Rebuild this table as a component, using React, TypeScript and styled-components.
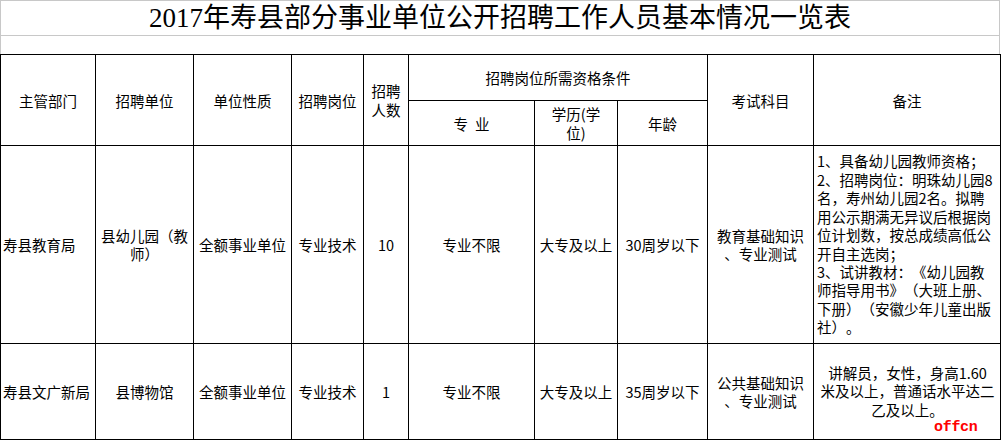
import styled, { createGlobalStyle } from 'styled-components';

const GlobalStyle = createGlobalStyle`
  html, body {
    margin: 0;
    padding: 0;
    background: #ffffff;
  }
  body {
    font-family: "Noto Sans CJK SC", "Liberation Sans", sans-serif;
    color: #000;
    text-spacing-trim: space-all;
  }
`;

const Sheet = styled.div`
  position: relative;
  width: 1000px;
`;

const TitleBar = styled.div`
  box-sizing: border-box;
  height: 35px;
  padding-top: 2px;
  border: 1px solid #c8c8c8;
  border-bottom: none;
  text-align: center;
  font-family: "Liberation Serif", "Noto Sans CJK SC", serif;
  font-size: 27px;
  line-height: 31px;
  white-space: nowrap;
`;

const Spacer = styled.div`
  box-sizing: border-box;
  height: 19px;
  border: 1px solid #c8c8c8;
  border-bottom: none;
`;

const Table = styled.table`
  border-collapse: collapse;
  table-layout: fixed;
  width: 1000px;
`;

const Row = styled.tr<{ $h: number }>`
  height: ${(p) => p.$h}px;
`;

const Cell = styled.td<{ $align?: 'left' | 'center' }>`
  border: 1px solid #000;
  padding: 0 2px;
  text-align: ${(p) => p.$align ?? 'center'};
  vertical-align: middle;
  font-size: 14.5px;
  line-height: 18px;
  white-space: pre;
`;

const HeadCell = styled(Cell)`
  line-height: 19px;
`;

const NoteCell = styled(Cell)`
  padding: 0 2px 0 3px;
  line-height: 18.4px;
`;

const Watermark = styled.span`
  position: absolute;
  left: 934px;
  top: 420px;
  font-family: "Liberation Mono", monospace;
  font-weight: 700;
  font-size: 15px;
  line-height: 15px;
  color: #ff0000;
  letter-spacing: -0.3px;
`;

const widths = [95, 98, 98, 72, 45, 126, 83, 90, 106, 187];

const rows = [
  {
    dept: '寿县教育局',
    unit: '县幼儿园（教\n师）',
    nature: '全额事业单位',
    post: '专业技术',
    count: '10',
    major: '专业不限',
    degree: '大专及以上',
    age: '30周岁以下',
    exam: '教育基础知识\n、专业测试',
    note: [
      '1、具备幼儿园教师资格；',
      '2、招聘岗位：明珠幼儿园8',
      '名，寿州幼儿园2名。拟聘',
      '用公示期满无异议后根据岗',
      '位计划数，按总成绩高低公',
      '开自主选岗；',
      '3、试讲教材：《幼儿园教',
      '师指导用书》（大班上册、',
      '下册）（安徽少年儿童出版',
      '社）。',
    ].join('\n'),
    noteAlign: 'left' as const,
    h: 198,
  },
  {
    dept: '寿县文广新局',
    unit: '县博物馆',
    nature: '全额事业单位',
    post: '专业技术',
    count: '1',
    major: '专业不限',
    degree: '大专及以上',
    age: '35周岁以下',
    exam: '公共基础知识\n、专业测试',
    note: ['讲解员，女性，身高1.60', '米及以上，普通话水平达二', '乙及以上。'].join('\n'),
    noteAlign: 'center' as const,
    h: 96,
  },
];

export default function App() {
  return (
    <>
      <GlobalStyle />
      <Sheet>
        <TitleBar>2017年寿县部分事业单位公开招聘工作人员基本情况一览表</TitleBar>
        <Spacer />
        <Table>
          <colgroup>
            {widths.map((w, i) => (
              <col key={i} style={{ width: w }} />
            ))}
          </colgroup>
          <tbody>
            <Row $h={46}>
              <HeadCell rowSpan={2}>主管部门</HeadCell>
              <HeadCell rowSpan={2}>招聘单位</HeadCell>
              <HeadCell rowSpan={2}>单位性质</HeadCell>
              <HeadCell rowSpan={2}>招聘岗位</HeadCell>
              <HeadCell rowSpan={2}>{'招聘\n人数'}</HeadCell>
              <HeadCell colSpan={3}>招聘岗位所需资格条件</HeadCell>
              <HeadCell rowSpan={2}>考试科目</HeadCell>
              <HeadCell rowSpan={2}>备注</HeadCell>
            </Row>
            <Row $h={45}>
              <HeadCell>{'专\u2002业'}</HeadCell>
              <HeadCell>{'学历(学\n位)'}</HeadCell>
              <HeadCell>年龄</HeadCell>
            </Row>
            {rows.map((r) => (
              <Row key={r.dept} $h={r.h}>
                <Cell $align="left">{r.dept}</Cell>
                <Cell>{r.unit}</Cell>
                <Cell>{r.nature}</Cell>
                <Cell>{r.post}</Cell>
                <Cell>{r.count}</Cell>
                <Cell>{r.major}</Cell>
                <Cell>{r.degree}</Cell>
                <Cell>{r.age}</Cell>
                <Cell>{r.exam}</Cell>
                <NoteCell $align={r.noteAlign}>{r.note}</NoteCell>
              </Row>
            ))}
          </tbody>
        </Table>
        <Watermark>offcn</Watermark>
      </Sheet>
    </>
  );
}
